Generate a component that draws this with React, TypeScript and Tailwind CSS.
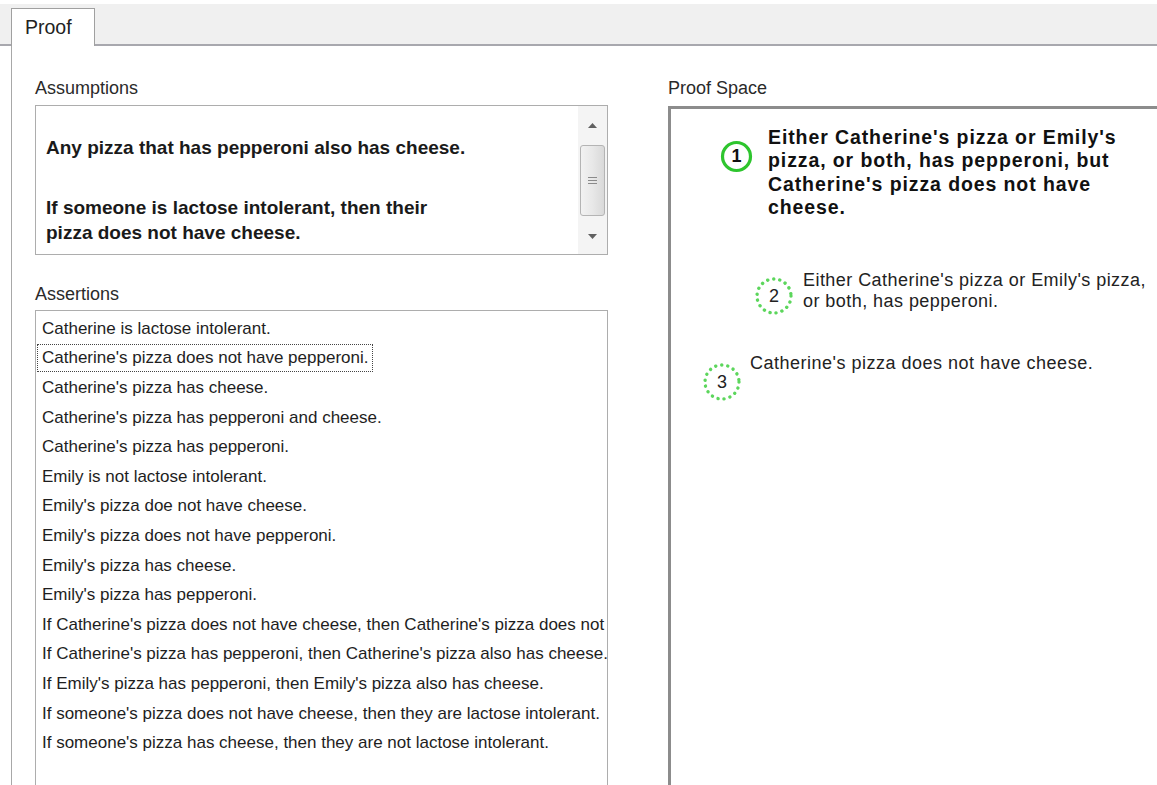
import React from "react";

const assumptions = [
  ["Any pizza that has pepperoni also has cheese."],
  ["If someone is lactose intolerant, then their", "pizza does not have cheese."],
];

const assertions = [
  "Catherine is lactose intolerant.",
  "Catherine's pizza does not have pepperoni.",
  "Catherine's pizza has cheese.",
  "Catherine's pizza has pepperoni and cheese.",
  "Catherine's pizza has pepperoni.",
  "Emily is not lactose intolerant.",
  "Emily's pizza doe not have cheese.",
  "Emily's pizza does not have pepperoni.",
  "Emily's pizza has cheese.",
  "Emily's pizza has pepperoni.",
  "If Catherine's pizza does not have cheese, then Catherine's pizza does not have pepperoni.",
  "If Catherine's pizza has pepperoni, then Catherine's pizza also has cheese.",
  "If Emily's pizza has pepperoni, then Emily's pizza also has cheese.",
  "If someone's pizza does not have cheese, then they are lactose intolerant.",
  "If someone's pizza has cheese, then they are not lactose intolerant.",
];

// Step number badge: solid ring for the goal, dotted ring for derived steps
function StepBadge({ n, dotted, size }: { n: number; dotted?: boolean; size: number }) {
  const r = size / 2 - 2;
  return (
    <div className="relative flex items-center justify-center" style={{ width: size, height: size }}>
      <svg width={size} height={size} className="absolute inset-0">
        {dotted ? (
          <circle
            cx={size / 2}
            cy={size / 2}
            r={r}
            fill="none"
            stroke="#5cd65c"
            strokeWidth={3.4}
            strokeLinecap="round"
            strokeDasharray="0.1 6"
          />
        ) : (
          <circle cx={size / 2} cy={size / 2} r={r - 0.5} fill="none" stroke="#2ec52e" strokeWidth={3.2} />
        )}
      </svg>
      <span className={dotted ? "relative text-[18px] text-[#222]" : "relative text-[18px] font-bold text-[#111]"}>
        {n}
      </span>
    </div>
  );
}

function ScrollBar() {
  return (
    <div className="flex w-[29px] flex-col items-center bg-[#f4f4f4]">
      <div className="flex h-[39px] w-full items-center justify-center">
        <svg width="9" height="5" viewBox="0 0 9 5">
          <path d="M0 5 L4.5 0 L9 5 Z" fill="#606060" />
        </svg>
      </div>
      <div className="flex h-[71px] w-[25px] items-center justify-center rounded-[3px] border border-[#b4b4b4] bg-gradient-to-r from-[#f2f2f2] via-[#e8e8e8] to-[#d9d9d9]">
        <div className="flex flex-col gap-[2px]">
          <div className="h-px w-[9px] bg-[#8a8a8a]" />
          <div className="h-px w-[9px] bg-[#8a8a8a]" />
          <div className="h-px w-[9px] bg-[#8a8a8a]" />
        </div>
      </div>
      <div className="flex flex-1 w-full items-center justify-center pt-[2px]">
        <svg width="9" height="5" viewBox="0 0 9 5">
          <path d="M0 0 L9 0 L4.5 5 Z" fill="#606060" />
        </svg>
      </div>
    </div>
  );
}

export default function App() {
  return (
    <div className="relative flex h-[785px] w-[1157px] flex-col overflow-hidden bg-white font-['Liberation_Sans',Arial,sans-serif] text-[#1e1e1e]">
      <div className="h-[4px] bg-white" />

      {/* tab strip */}
      <div className="flex h-[42px] items-end border-b-2 border-[#a8a8ae] bg-[#f0f0f0] pl-[11px]">
        <div className="relative z-10 -mb-[2px] h-[38px] w-[84px] border border-b-0 border-[#a0a0a0] bg-white pl-[13px] pt-[7px] text-[19.5px] leading-[22px] text-[#222]">
          Proof
        </div>
      </div>

      {/* tab page */}
      <div className="ml-[11px] flex flex-1 border-l border-[#a8a8a8]">
        <div className="ml-[23px] flex w-[573px] flex-col">
          <div className="mt-[32px] text-[18px] leading-[20px] text-[#2a2a2a]">Assumptions</div>
          <div className="mt-[7px] flex h-[150px] border border-[#adadad]">
            <div className="flex-1 pl-[10px] pt-[29px] text-[19px] font-bold leading-[25px] text-[#1a1a1a]">
              {assumptions.map((lines, i) => (
                <div key={i} className="mb-[35px]">
                  {lines.map((l) => (
                    <div key={l}>{l}</div>
                  ))}
                </div>
              ))}
            </div>
            <ScrollBar />
          </div>

          <div className="mt-[29px] text-[18px] leading-[20px] text-[#2a2a2a]">Assertions</div>
          <div className="mt-[6px] flex-1 overflow-hidden border border-b-0 border-[#adadad] pt-[3px]">
            {assertions.map((a, i) => (
              <div key={a} className="flex h-[29.6px] items-center whitespace-nowrap pl-px">
                <span
                  className={
                    i === 1
                      ? "inline-block h-[28px] border border-dotted border-[#444] px-[4px] text-[17px] leading-[26px]"
                      : "inline-block h-[28px] border border-transparent px-[4px] text-[17px] leading-[26px]"
                  }
                >
                  {a}
                </span>
              </div>
            ))}
          </div>
        </div>

        <div className="ml-[60px] flex flex-col">
          <div className="mt-[32px] text-[18px] leading-[20px] text-[#2a2a2a]">Proof Space</div>
          <div className="relative mt-[8px] w-[520px] flex-1 border-l-[3px] border-t-[3px] border-[#8c8c8c]">
            <div className="absolute left-[49px] top-[31px]">
              <StepBadge n={1} size={33} />
            </div>
            <div className="absolute left-[97px] top-[17px] w-[400px] text-[19.5px] font-bold leading-[23.3px] tracking-[0.9px] text-[#111]">
              Either Catherine's pizza or Emily's
              <br />
              pizza, or both, has pepperoni, but
              <br />
              Catherine's pizza does not have
              <br />
              cheese.
            </div>

            <div className="absolute left-[84px] top-[168px]">
              <StepBadge n={2} dotted size={38} />
            </div>
            <div className="absolute left-[132px] top-[161px] text-[18px] leading-[21px] tracking-[0.45px] text-[#222]">
              Either Catherine's pizza or Emily's pizza,
              <br />
              or both, has pepperoni.
            </div>

            <div className="absolute left-[32px] top-[254px]">
              <StepBadge n={3} dotted size={38} />
            </div>
            <div className="absolute left-[79px] top-[244px] text-[18px] leading-[21px] tracking-[0.5px] text-[#222]">
              Catherine's pizza does not have cheese.
            </div>
          </div>
        </div>
      </div>
    </div>
  );
}
